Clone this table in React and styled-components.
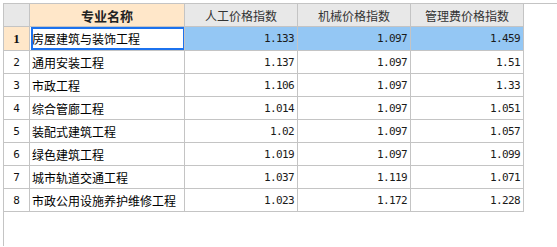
import React from 'react';
import styled, { createGlobalStyle, css } from 'styled-components';

const GlobalStyle = createGlobalStyle`
  html, body {
    margin: 0;
    padding: 0;
    background: #ffffff;
  }
  body {
    font-family: "Noto Sans CJK SC", "Liberation Sans", sans-serif;
    font-size: 12px;
    color: #000;
  }
`;

const LINE = '#c4c4c4';
const COLS = '26px 155px 113px 113px 113px';
const MONO = '"DejaVu Sans Mono", "Liberation Mono", monospace';

const Frame = styled.div`
  margin: 3px 0 0 3px;
  height: 243px;
  border-top: 1px solid ${LINE};
  border-left: 1px solid ${LINE};
  box-sizing: border-box;
`;

const Grid = styled.div`
  display: grid;
  grid-template-columns: ${COLS};
  width: max-content;
`;

const Cell = styled.div`
  box-sizing: border-box;
  height: ${p => (p.$tall ? 24 : 23)}px;
  border-right: 1px solid ${LINE};
  border-bottom: 1px solid ${LINE};
  display: flex;
  align-items: center;
  overflow: hidden;
  white-space: nowrap;
`;

const HeadCell = styled(Cell)`
  justify-content: center;
  background: ${p => (p.$active ? '#ffe7c9' : '#e8e8e8')};
  color: #333;
  font-size: 12px;
  font-weight: ${p => (p.$active ? 700 : 400)};
  ${p => p.$active && css`font-size: 13px; color: #222;`}
`;

const RowNum = styled(Cell)`
  justify-content: center;
  background: ${p => (p.$active ? '#ffe7c9' : '#ffffff')};
  font-family: ${p => (p.$active ? '"Liberation Serif", serif' : MONO)};
  font-weight: ${p => (p.$active ? 700 : 400)};
  font-size: ${p => (p.$active ? 13 : 11)}px;
  color: #111;
`;

const NameCell = styled(Cell)`
  padding-left: 2px;
  background: #fff;
  font-size: 12px;
  color: #000;
  ${p => p.$focus && css`
    position: relative;
    &::after {
      content: '';
      position: absolute;
      left: 1px;
      top: 0;
      right: -1px;
      bottom: 0;
      border: 2px solid #1c72ee;
      pointer-events: none;
    }
  `}
`;

const NumCell = styled(Cell)`
  justify-content: flex-end;
  padding-right: 3px;
  background: ${p => (p.$active ? '#94c7f4' : '#ffffff')};
  font-family: ${MONO};
  font-size: 11px;
  letter-spacing: -0.6px;
  color: #1a1a1a;
`;

const headers = ['专业名称', '人工价格指数', '机械价格指数', '管理费价格指数'];

const rows = [
  ['房屋建筑与装饰工程', '1.133', '1.097', '1.459'],
  ['通用安装工程', '1.137', '1.097', '1.51'],
  ['市政工程', '1.106', '1.097', '1.33'],
  ['综合管廊工程', '1.014', '1.097', '1.051'],
  ['装配式建筑工程', '1.02', '1.097', '1.057'],
  ['绿色建筑工程', '1.019', '1.097', '1.099'],
  ['城市轨道交通工程', '1.037', '1.119', '1.071'],
  ['市政公用设施养护维修工程', '1.023', '1.172', '1.228'],
];

const selected = 0;

export default function App() {
  return (
    <>
      <GlobalStyle />
      <Frame>
        <Grid>
          <HeadCell />
          {headers.map((h, i) => (
            <HeadCell key={h} $active={i === 0}>{h}</HeadCell>
          ))}
          {rows.map((r, i) => {
            const active = i === selected;
            return (
              <React.Fragment key={r[0]}>
                <RowNum $active={active} $tall={active}>{i + 1}</RowNum>
                <NameCell $focus={active} $tall={active}>{r[0]}</NameCell>
                {r.slice(1).map((v, j) => (
                  <NumCell key={j} $active={active} $tall={active}>{v}</NumCell>
                ))}
              </React.Fragment>
            );
          })}
        </Grid>
      </Frame>
    </>
  );
}
